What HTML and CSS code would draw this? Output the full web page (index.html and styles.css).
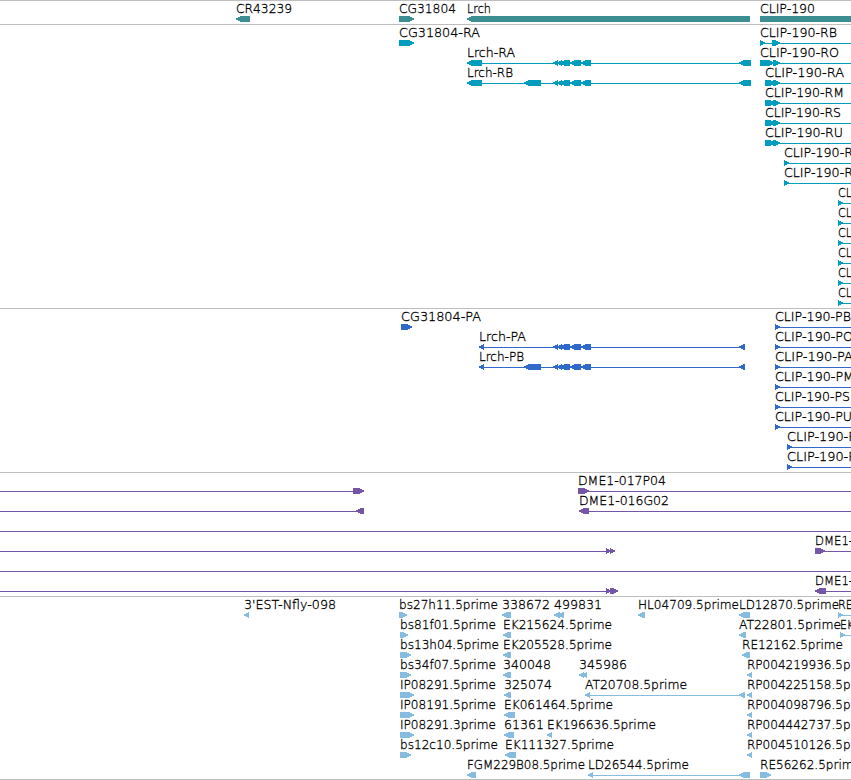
FILE: index.html
```html
<!DOCTYPE html>
<html lang="en">

<head>
    <meta charset="UTF-8">
    <meta name="viewport" content="width=device-width, initial-scale=1.0">
    <title>Genome Browser</title>
    <link rel="stylesheet" href="styles.css">
</head>

<body>
    <main class="browser">
        <svg class="track gene" id="gene" height="23"></svg>
        <svg class="track transcript" id="transcript" height="283"></svg>
        <svg class="track protein" id="protein" height="163"></svg>
        <svg class="track bac" id="bac" height="123"></svg>
        <svg class="track est" id="est" height="182"></svg>
    </main>
    <script src="script.js"></script>
</body>

</html>
```
FILE: styles.css
```css
body {
    margin: 0;
    background-color: #fff;
    overflow: hidden;
}

.browser {
    display: flex;
    flex-direction: column;
    border-bottom: 1px solid #bebebe;
}

.track {
    display: block;
    width: 100%;
    border-top: 1px solid #bebebe;
    overflow: hidden;
    flex-shrink: 0;
}

.label {
    font-family: "DejaVu Sans", sans-serif;
    font-size: 12px;
    font-weight: 200;
    fill: #000;
    stroke: #000;
    stroke-width: 0.3px;
    white-space: pre;
}

.gene {
    color: #3d8e92;
}

.transcript {
    color: #009dbf;
}

.protein {
    color: #3069cc;
}

.bac {
    color: #7455a8;
}

.est {
    color: #86bcdf;
}

.feature,
.intron {
    fill: currentColor;
}

.feature {
    shape-rendering: crispEdges;
}
```
FILE: script.js
```javascript
const NS = "http://www.w3.org/2000/svg";
const ROW = 20;

function add(track, tag, attrs, text) {
    const el = document.createElementNS(NS, tag);
    for (const key in attrs) el.setAttribute(key, attrs[key]);
    if (text) el.textContent = text;
    document.getElementById(track).appendChild(el);
}

function label(track, row, text, x, width) {
    add(track, "text", {
        class: "label", x: x, y: row * ROW + 12,
        textLength: width, lengthAdjust: "spacingAndGlyphs"
    }, text);
}

function line(track, row, from, to) {
    add(track, "rect", { class: "intron", x: from, y: row * ROW + 18, width: to - from, height: 1 });
}

// dir: -1 points left, 1 points right, 0 is a plain bar
function box(track, row, from, to, dir) {
    const y = row * ROW + 15;
    const head = dir ? Math.min(6, to - from) : 0;
    let d;
    if (dir < 0) {
        const tip = from - 0.8;
        d = `M${tip} ${y + 3}L${from + head - 0.5} ${y}H${to}V${y + 6}H${from + head - 0.5}Z`;
    } else if (dir > 0) {
        const tip = to + 0.8;
        d = `M${from} ${y}H${to - head + 0.5}L${tip} ${y + 3}L${to - head + 0.5} ${y + 6}H${from}Z`;
    } else {
        d = `M${from} ${y}H${to}V${y + 6}H${from}Z`;
    }
    add(track, "path", { class: "feature", d: d });
}

// Genes
label("gene", 0, "CR43239", 236, 56);
box("gene", 0, 236, 250, -1);
label("gene", 0, "CG31804", 399, 57);
box("gene", 0, 399, 414, 1);
label("gene", 0, "Lrch", 467, 24);
box("gene", 0, 467, 750, -1);
label("gene", 0, "CLIP-190", 760, 55);
box("gene", 0, 760, 860, 0);

// Transcripts
label("transcript", 0, "CG31804-RA", 399, 81);
box("transcript", 0, 399, 414, 1);
const exons = [[553, 558], [557, 562], [560, 570], [570, 581], [581, 591]];
["Lrch-RA", "Lrch-RB"].forEach((name, i) => {
    const row = i + 1;
    label("transcript", row, name, 467, i ? 46 : 48);
    line("transcript", row, 467, 751);
    box("transcript", row, 467, 482, -1);
    exons.forEach(e => box("transcript", row, e[0], e[1], -1));
    box("transcript", row, 739, 751, -1);
});
box("transcript", 2, 524, 541, -1);

[
    ["CLIP-190-RB", 760, 77, [[760, 765], [772, 780]]],
    ["CLIP-190-RO", 760, 79, [[760, 774], [773, 780]]],
    ["CLIP-190-RA", 765, 79, [[765, 775], [773, 780]]],
    ["CLIP-190-RM", 765, 79, [[765, 775], [773, 780]]],
    ["CLIP-190-RS", 765, 76, [[765, 775], [773, 780]]],
    ["CLIP-190-RU", 765, 78, [[765, 775], [773, 780]]],
    ["CLIP-190-R", 784, 69, [[784, 789]]],
    ["CLIP-190-R", 784, 69, [[784, 789]]]
].forEach((t, row) => {
    label("transcript", row, t[0], t[1], t[2]);
    line("transcript", row, t[1], 860);
    t[3].forEach(e => box("transcript", row, e[0], e[1], 1));
});
for (let row = 8; row < 14; row++) {
    label("transcript", row, "CL", 838, 14);
    line("transcript", row, 838, 860);
    box("transcript", row, 838, 843, 1);
}

// Proteins
label("protein", 0, "CG31804-PA", 401, 80);
box("protein", 0, 401, 412, 1);
["Lrch-PA", "Lrch-PB"].forEach((name, i) => {
    const row = i + 1;
    label("protein", row, name, 479, i ? 45 : 47);
    line("protein", row, 479, 745);
    box("protein", row, 479, 484, -1);
    exons.forEach(e => box("protein", row, e[0], e[1], -1));
    box("protein", row, 739, 745, -1);
});
box("protein", 2, 524, 541, -1);

[
    ["CLIP-190-PB", 775, 76],
    ["CLIP-190-PO", 775, 78],
    ["CLIP-190-PA", 775, 78],
    ["CLIP-190-PM", 775, 79],
    ["CLIP-190-PS", 775, 75],
    ["CLIP-190-PU", 775, 77],
    ["CLIP-190-P", 787, 69],
    ["CLIP-190-P", 787, 69]
].forEach((p, row) => {
    label("protein", row, p[0], p[1], p[2]);
    line("protein", row, p[1], 860);
    box("protein", row, p[1], p[1] + 5, 1);
});

// BAC ends
line("bac", 0, 0, 353);
box("bac", 0, 353, 364, 1);
label("bac", 0, "DME1-017P04", 578, 88);
line("bac", 0, 578, 860);
box("bac", 0, 578, 589, 1);
line("bac", 1, 0, 356);
box("bac", 1, 356, 364, -1);
label("bac", 1, "DME1-016G02", 579, 90);
line("bac", 1, 579, 860);
box("bac", 1, 579, 589, -1);
line("bac", 2, 0, 860);
line("bac", 3, 0, 606);
box("bac", 3, 606, 611, 1);
box("bac", 3, 610, 615, 1);
label("bac", 3, "DME1-", 815, 38);
line("bac", 3, 815, 860);
box("bac", 3, 815, 825, 1);
line("bac", 4, 0, 860);
line("bac", 5, 0, 606);
box("bac", 5, 606, 611, 1);
box("bac", 5, 610, 618, 1);
label("bac", 5, "DME1-", 815, 38);
line("bac", 5, 815, 860);
box("bac", 5, 815, 826, -1);

// ESTs: row, name, x, text width, start, end, direction
[
    [0, "3'EST-Nfly-098", 244, 92, 244, 249, -1],
    [0, "bs27h11.5prime", 399, 99, 399, 407, 1],
    [1, "bs81f01.5prime", 400, 96, 400, 408, 1],
    [2, "bs13h04.5prime", 400, 99, 400, 411, 1],
    [3, "bs34f07.5prime", 400, 96, 400, 411, 1],
    [4, "IP08291.5prime", 400, 96, 400, 414, 1],
    [5, "IP08191.5prime", 400, 96, 400, 414, 1],
    [6, "IP08291.3prime", 400, 96, 400, 414, 1],
    [7, "bs12c10.5prime", 400, 98, 400, 411, 1],
    [0, "338672", 502, 48, 502, 511, -1],
    [1, "EK215624.5prime", 503, 109, 503, 511, -1],
    [2, "EK205528.5prime", 503, 109, 503, 511, -1],
    [3, "340048", 503, 48, 503, 511, -1],
    [4, "325074", 504, 48, 504, 511, -1],
    [5, "EK061464.5prime", 504, 109, 504, 515, -1],
    [6, "61361", 504, 40, 504, 514, -1],
    [7, "EK111327.5prime", 505, 109, 505, 516, -1],
    [8, "FGM229B08.5prime", 467, 118, 467, 476, -1],
    [0, "499831", 554, 48, 554, 560, -1],
    [6, "EK196636.5prime", 547, 109, 547, 552, -1],
    [3, "345986", 579, 48, 579, 584, -1],
    [4, "AT20708.5prime", 585, 102, 585, 590, -1],
    [8, "LD26544.5prime", 588, 101, 588, 593, -1],
    [0, "HL04709.5prime", 638, 101, 638, 645, -1],
    [0, "LD12870.5prime", 739, 100, 739, 750, -1],
    [1, "AT22801.5prime", 739, 102, 739, 746, -1],
    [2, "RE12162.5prime", 742, 101, 742, 750, -1],
    [3, "RP004219936.5prime", 747, 131, 747, 752, -1],
    [4, "RP004225158.5prime", 747, 131, 747, 752, -1],
    [5, "RP004098796.5prime", 747, 131, 747, 752, -1],
    [6, "RP004442737.5prime", 747, 131, 747, 752, -1],
    [7, "RP004510126.5prime", 747, 131, 747, 752, -1],
    [8, "RE56262.5prime", 760, 101, 760, 771, 1],
    [0, "RE", 838, 15, 838, 843, 1],
    [1, "EK", 840, 14, 840, 845, 1]
].forEach(e => {
    label("est", e[0], e[1], e[2], e[3]);
    box("est", e[0], e[4], e[5], e[6]);
});

// second parts of split ESTs
box("est", 0, 558, 564, -1);
box("est", 3, 582, 587, -1);
box("est", 4, 739, 745, -1);
box("est", 8, 739, 750, -1);
line("est", 4, 585, 745);
line("est", 8, 588, 745);
line("est", 0, 838, 860);
line("est", 1, 840, 860);
```
